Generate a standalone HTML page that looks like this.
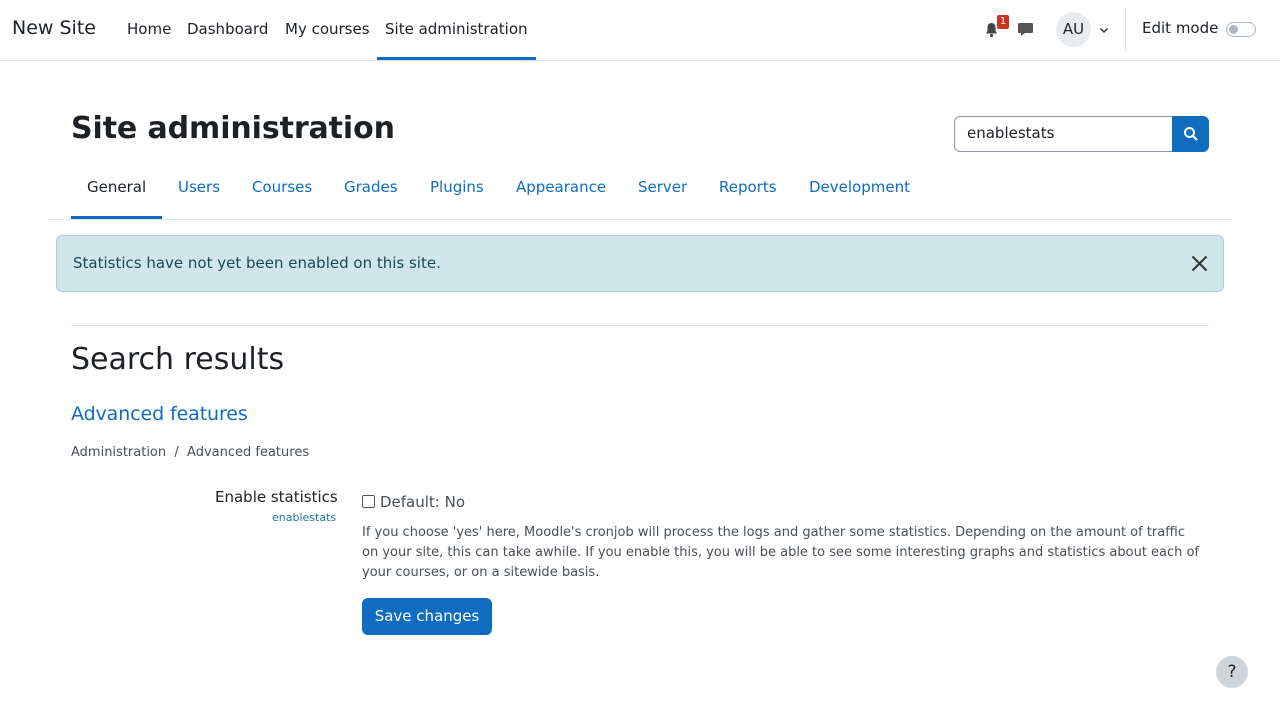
<!DOCTYPE html>
<html><head><style>
*{box-sizing:border-box;margin:0;padding:0}
body{width:1280px;height:720px;overflow:hidden;background:#fff;font-family:"DejaVu Sans","Liberation Sans",sans-serif;color:#1d2125;position:relative}
.abs{position:absolute;white-space:nowrap}
.nav{position:absolute;left:0;top:0;width:1280px;height:61px;border-bottom:1px solid #dee2e6}
a{color:#0f6cbf;text-decoration:none}
</style></head><body>
<div class="nav">
<div class="abs" style="left:12px;top:17px;font-size:19px">New Site</div>
<div class="abs" style="left:127px;top:20px;font-size:15px">Home</div>
<div class="abs" style="left:187px;top:20px;font-size:15px">Dashboard</div>
<div class="abs" style="left:285px;top:20px;font-size:15px">My courses</div>
<div class="abs" style="left:385px;top:20px;font-size:15px">Site administration</div>
<div class="abs" style="left:377px;top:57px;width:159px;height:3px;background:#0f6cbf"></div>
<svg class="abs" style="left:984px;top:22px" width="15" height="16" viewBox="0 0 15 16"><path d="M7.5 1c-2.5 0-4 2-4 4.5v3.5L2 11.5h11L11.5 9V5.5C11.5 3 10 1 7.5 1z" fill="#444"/><circle cx="7.5" cy="13.5" r="1.6" fill="#444"/></svg>
<div class="abs" style="left:997px;top:15px;width:12px;height:14px;background:#ca3120;color:#fff;font-size:10px;text-align:center;line-height:14px;border-radius:2px">1</div>
<svg class="abs" style="left:1017px;top:22px" width="17" height="16" viewBox="0 0 17 16"><path d="M2 1h13a1 1 0 0 1 1 1v8a1 1 0 0 1-1 1H8l-4 3v-3H2a1 1 0 0 1-1-1V2a1 1 0 0 1 1-1z" fill="#555"/></svg>
<div class="abs" style="left:1056px;top:12px;width:35px;height:35px;border-radius:50%;background:#e9ecef;font-size:15px;text-align:center;line-height:35px">AU</div>
<svg class="abs" style="left:1099px;top:27px" width="10" height="7" viewBox="0 0 10 7"><path d="M1.5 1.5l3.5 3.5 3.5-3.5" stroke="#333" stroke-width="1.5" fill="none"/></svg>
<div class="abs" style="left:1125px;top:8px;width:1px;height:44px;background:#dee2e6"></div>
<div class="abs" style="left:1142px;top:19px;font-size:15px">Edit mode</div>
<div class="abs" style="left:1226px;top:22px;width:30px;height:15px;border:1px solid #adb5bd;border-radius:8px"><div style="position:absolute;left:2px;top:2px;width:9px;height:9px;border-radius:50%;background:#adb5bd"></div></div>
</div>
<div class="abs" style="left:71px;top:111px;font-size:30px;font-weight:bold;letter-spacing:-0.1px">Site administration</div>
<div class="abs" style="left:954px;top:116px;width:219px;height:36px;border:1px solid #8f959e;border-radius:6px 0 0 6px;font-size:15px;padding:7px 12px">enablestats</div>
<div class="abs" style="left:1172px;top:116px;width:37px;height:36px;background:#0f6cbf;border-radius:0 6px 6px 0"><svg style="position:absolute;left:11px;top:10px" width="16" height="16" viewBox="0 0 16 16"><circle cx="6.5" cy="6.5" r="4.5" stroke="#fff" stroke-width="2" fill="none"/><path d="M10 10l4 4" stroke="#fff" stroke-width="2.2"/></svg></div>
<div style="position:absolute;left:48px;top:219px;width:1184px;height:1px;background:#dee2e6"></div>
<div class="abs" style="left:87px;top:178px;font-size:15px">General</div>
<div class="abs" style="left:71px;top:216px;width:91px;height:3px;background:#0f6cbf"></div>
<div class="abs" style="left:178px;top:178px;font-size:15px;color:#0f6cbf">Users</div>
<div class="abs" style="left:252px;top:178px;font-size:15px;color:#0f6cbf">Courses</div>
<div class="abs" style="left:344px;top:178px;font-size:15px;color:#0f6cbf">Grades</div>
<div class="abs" style="left:430px;top:178px;font-size:15px;color:#0f6cbf">Plugins</div>
<div class="abs" style="left:516px;top:178px;font-size:15px;color:#0f6cbf">Appearance</div>
<div class="abs" style="left:638px;top:178px;font-size:15px;color:#0f6cbf">Server</div>
<div class="abs" style="left:719px;top:178px;font-size:15px;color:#0f6cbf">Reports</div>
<div class="abs" style="left:809px;top:178px;font-size:15px;color:#0f6cbf">Development</div>
<div class="abs" style="left:56px;top:235px;width:1168px;height:57px;background:#cfe6ea;border:1px solid #a6d1d9;border-radius:6px"></div>
<div class="abs" style="left:73px;top:254px;font-size:15px;color:#1b4a55">Statistics have not yet been enabled on this site.</div>
<svg class="abs" style="left:1191px;top:255px" width="17" height="17" viewBox="0 0 17 17"><path d="M1.5 1.5l14 14M15.5 1.5l-14 14" stroke="#333" stroke-width="2"/></svg>
<div class="abs" style="left:71px;top:325px;width:1138px;height:1px;background:#dee2e6"></div>
<div class="abs" style="left:71px;top:342px;font-size:30px">Search results</div>
<div class="abs" style="left:71px;top:403px;font-size:19px;color:#0f6cbf;letter-spacing:-0.1px">Advanced features</div>
<div class="abs" style="left:71px;top:445px;font-size:13px;color:#495057">Administration &nbsp;/&nbsp; Advanced features</div>
<div class="abs" style="left:215px;top:488px;font-size:15px">Enable statistics</div>
<div class="abs" style="left:272px;top:511px;font-size:11px;color:#1a7d8f">enablestats</div>
<div class="abs" style="left:362px;top:495px;width:13px;height:13px;border:1px solid #555;border-radius:2px"></div>
<div class="abs" style="left:380px;top:493px;font-size:15px;color:#495057">Default: No</div>
<div class="abs" style="left:362px;top:523px;font-size:13px;color:#495057;line-height:20px">If you choose 'yes' here, Moodle's cronjob will process the logs and gather some statistics. Depending on the amount of traffic<br>on your site, this can take awhile. If you enable this, you will be able to see some interesting graphs and statistics about each of<br>your courses, or on a sitewide basis.</div>
<div class="abs" style="left:362px;top:598px;width:130px;height:37px;background:#0f6cbf;border-radius:6px;color:#fff;font-size:15px;text-align:center;line-height:36px">Save changes</div>
<div class="abs" style="left:1216px;top:656px;width:32px;height:32px;border-radius:50%;background:#ced4da;font-size:17px;text-align:center;line-height:32px">?</div>
</body></html>
